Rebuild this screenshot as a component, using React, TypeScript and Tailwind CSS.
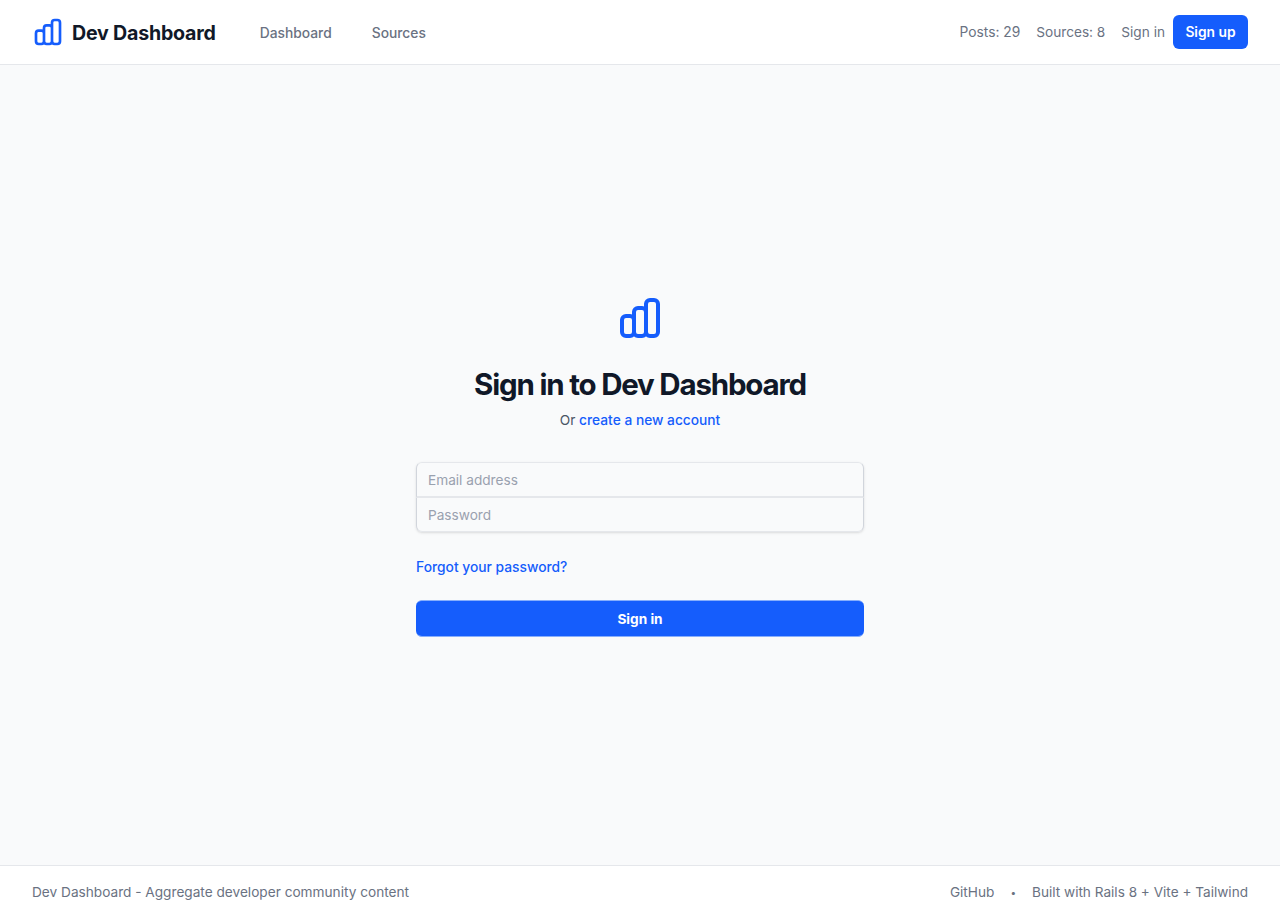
function BarsIcon({ className }: { className: string }) {
  return (
    <svg className={className} viewBox="0 0 24 24" fill="none" stroke="currentColor" strokeWidth={2} strokeLinecap="round" strokeLinejoin="round">
      <path d="M9 19v-6a2 2 0 00-2-2H5a2 2 0 00-2 2v6a2 2 0 002 2h2a2 2 0 002-2zm0 0V9a2 2 0 012-2h2a2 2 0 012 2v10m-6 0a2 2 0 002 2h2a2 2 0 002-2m0 0V5a2 2 0 012-2h2a2 2 0 012 2v14a2 2 0 01-2 2h-2a2 2 0 01-2-2z" />
    </svg>
  );
}

export default function App() {
  return (
    <div className="flex min-h-screen flex-col bg-gray-50 font-['Inter',sans-serif] text-[13.65px] leading-5 text-gray-500">
      <header className="flex h-[65px] items-center justify-between border-b border-gray-200 bg-white px-8">
        <div className="flex items-center">
          <a href="#" className="flex items-center gap-2 text-gray-900">
            <BarsIcon className="size-8 text-[#155dfc]" />
            <span className="pt-0.5 text-[19.6px] leading-7 font-bold tracking-[-0.2px]">Dev Dashboard</span>
          </a>
          <nav className="ml-8 flex gap-4 pt-px text-[13.8px] font-medium">
            <a href="#" className="px-3 py-2">Dashboard</a>
            <a href="#" className="px-3 py-2">Sources</a>
          </nav>
        </div>
        <div className="flex items-center">
          <span className="text-[13.8px]">Posts: 29</span>
          <span className="ml-4">Sources: 8</span>
          <a href="#" className="ml-4">Sign in</a>
          <a href="#" className="ml-2 w-[75px] rounded-md bg-[#155dfc] py-[7px] text-center text-[13.8px] font-semibold text-white">Sign up</a>
        </div>
      </header>
      <main className="flex flex-1 items-center justify-center">
        <div className="flex w-[448px] flex-col">
          <BarsIcon className="size-12 self-center text-[#155dfc]" />
          <h1 className="mt-6 text-center text-[29.5px] leading-9 font-bold tracking-[-1.2px] text-gray-900">Sign in to Dev Dashboard</h1>
          <p className="mt-2 text-center text-gray-600">
            Or <a href="#" className="text-[13.75px] font-medium text-[#155dfc]">create a new account</a>
          </p>
          <form className="mt-8 flex flex-col">
            <div className="flex flex-col rounded-md shadow-sm">
              <input type="email" placeholder="Email address" className="h-9 rounded-t-md border border-b-2 border-gray-300 border-y-gray-200 px-[11px] pt-px placeholder:text-gray-400" />
              <input type="password" placeholder="Password" className="h-[34px] rounded-b-md border border-t-0 border-gray-300 border-b-gray-200 px-[11px] pt-px placeholder:text-gray-400" />
            </div>
            <a href="#" className="mt-[25px] self-start text-[13.8px] font-medium text-[#155dfc]">Forgot your password?</a>
            <button type="button" className="mt-[23px] h-[37px] rounded-md border-y border-[#87aefc] bg-[#155dfc] pt-px font-bold text-white">Sign in</button>
          </form>
        </div>
      </main>
      <footer className="flex h-[53px] items-center justify-between border-t border-gray-200 bg-white px-8">
        <span>Dev Dashboard - Aggregate developer community content</span>
        <div className="flex items-center gap-4">
          <a href="#">GitHub</a>
          <span className="text-[10px]">•</span>
          <span className="text-[13.6px]">Built with Rails 8 + Vite + Tailwind</span>
        </div>
      </footer>
    </div>
  );
}
